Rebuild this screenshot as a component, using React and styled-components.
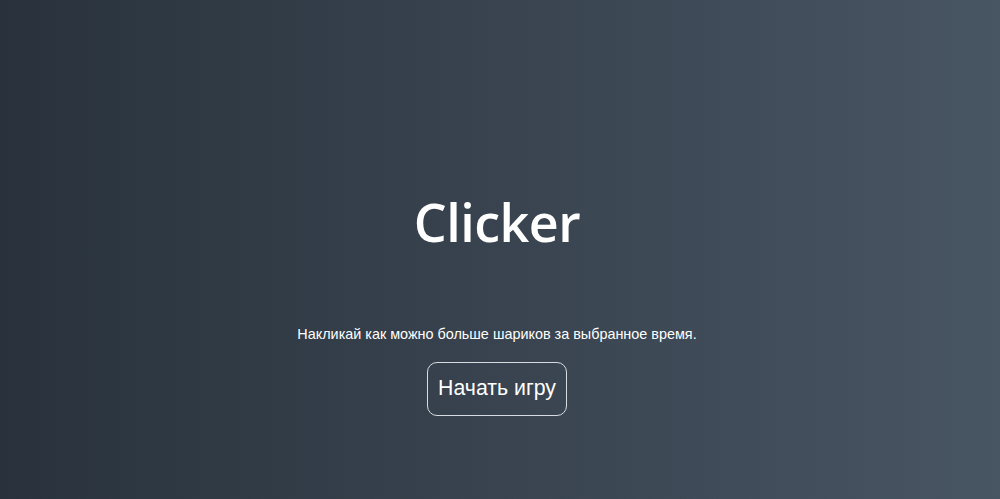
import styled, { createGlobalStyle } from "styled-components";

const GlobalStyle = createGlobalStyle`
    html, body {
        margin: 0;
        padding: 0;
        height: 100%;
    }

    #root {
        height: 100%;
    }
`

const Screen = styled.div`
    box-sizing: border-box;
    height: 100vh;
    padding: 108px 6px 0 0;
    display: flex;
    flex-direction: column;
    align-items: center;
    justify-content: center;
    background: linear-gradient(90deg, #29323c, #485563);
    color: #fff;
    font-family: "Liberation Sans", Arial, sans-serif;
`

const Title = styled.h1`
    margin: 0 0 72px;
    font-family: "Open Sans", sans-serif;
    font-size: 52px;
    font-weight: 600;
    line-height: 1.2;
    letter-spacing: -0.5px;
`

const Description = styled.p`
    margin: 0 0 19px;
    font-size: 14.4px;
    line-height: 1.2;
`

const StartButton = styled.button`
    box-sizing: border-box;
    height: 54px;
    padding: 0 10px;
    background: transparent;
    border: 1px solid #d8dbe0;
    border-radius: 10px;
    color: #fff;
    font-family: "Liberation Sans", Arial, sans-serif;
    font-size: 21.3px;
    white-space: nowrap;
    cursor: pointer;
`

function App() {
    return (
        <>
            <GlobalStyle />
            <Screen>
                <Title>Clicker</Title>
                <Description>Накликай как можно больше шариков за выбранное время.</Description>
                <StartButton>Начать игру</StartButton>
            </Screen>
        </>
    );
}

export default App;
